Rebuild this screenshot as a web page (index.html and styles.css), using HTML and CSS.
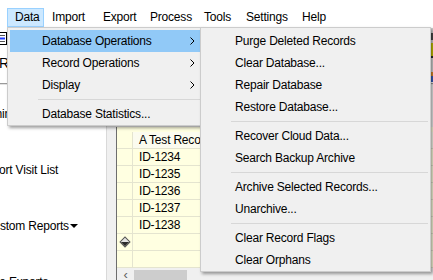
FILE: index.html
```html
<!DOCTYPE html>
<html>
<head>
<meta charset="utf-8">
<link rel="stylesheet" href="styles.css">
</head>
<body>
<div class="window">
  <div class="menubar">
    <span class="mb-item active">Data</span>
    <span class="mb-item">Import</span>
    <span class="mb-item">Export</span>
    <span class="mb-item">Process</span>
    <span class="mb-item">Tools</span>
    <span class="mb-item">Settings</span>
    <span class="mb-item">Help</span>
  </div>
  <div class="toolbar">
    <div class="tb-left">
      <svg class="tb-icon" width="10" height="14" viewBox="0 0 10 14">
        <rect x="-2.5" y="0.5" width="9" height="12" fill="#fff" stroke="#000"/>
        <line x1="0" y1="3.5" x2="5" y2="3.5" stroke="#555"/>
        <line x1="0" y1="6.5" x2="5" y2="6.5" stroke="#1e3cff" stroke-width="2"/>
        <line x1="0" y1="9.5" x2="5" y2="9.5" stroke="#555"/>
      </svg>
      <span class="tb-label">Run</span>
    </div>
    <div class="tb-right"></div>
  </div>
  <div class="workspace">
    <div class="leftpanel">
      <div class="lp-item lp-a">Admin</div>
      <div class="lp-item lp-b">Export Visit List</div>
      <div class="lp-item lp-c">Custom Reports<span class="caret"></span></div>
      <div class="lp-item lp-d">Create Exports</div>
    </div>
    <div class="gutter"></div>
    <div class="gridarea">
      <div class="grid-top"></div>
      <div class="grid">
        <div class="row head"><div class="rh"></div><div class="cell hcell">A Test Record</div></div>
        <div class="row"><div class="rh"></div><div class="cell">ID-1234</div></div>
        <div class="row"><div class="rh"></div><div class="cell">ID-1235</div></div>
        <div class="row"><div class="rh"></div><div class="cell">ID-1236</div></div>
        <div class="row"><div class="rh"></div><div class="cell">ID-1237</div></div>
        <div class="row"><div class="rh"></div><div class="cell">ID-1238</div></div>
        <div class="row"><div class="rh"><span class="diamond"></span></div><div class="cell"></div></div>
        <div class="row"><div class="rh"></div><div class="cell"></div></div>
      </div>
      <div class="hscroll">
        <span class="sb-arrow">‹</span>
        <span class="sb-thumb"></span>
      </div>
    </div>
  </div>

  <div class="menu dropdown">
    <div class="mi hot">Database Operations<span class="chev"><svg width="5" height="8" viewBox="0 0 5 8"><path d="M0.5 0.5 L4 4 L0.5 7.5" fill="none" stroke="#000" stroke-width="1"/></svg></span></div>
    <div class="mi">Record Operations<span class="chev"><svg width="5" height="8" viewBox="0 0 5 8"><path d="M0.5 0.5 L4 4 L0.5 7.5" fill="none" stroke="#000" stroke-width="1"/></svg></span></div>
    <div class="mi">Display<span class="chev"><svg width="5" height="8" viewBox="0 0 5 8"><path d="M0.5 0.5 L4 4 L0.5 7.5" fill="none" stroke="#000" stroke-width="1"/></svg></span></div>
    <div class="sep"></div>
    <div class="mi">Database Statistics...</div>
  </div>

  <div class="menu submenu">
    <div class="mi">Purge Deleted Records</div>
    <div class="mi">Clear Database...</div>
    <div class="mi">Repair Database</div>
    <div class="mi">Restore Database...</div>
    <div class="sep"></div>
    <div class="mi">Recover Cloud Data...</div>
    <div class="mi">Search Backup Archive</div>
    <div class="sep"></div>
    <div class="mi">Archive Selected Records...</div>
    <div class="mi">Unarchive...</div>
    <div class="sep"></div>
    <div class="mi">Clear Record Flags</div>
    <div class="mi">Clear Orphans</div>
  </div>
</div>
</body>
</html>
```
FILE: styles.css
```css
* { box-sizing: border-box; }
html, body {
  margin: 0;
  padding: 0;
  background: #fff;
}
body {
  font-family: "Liberation Sans", Arial, sans-serif;
  font-size: 12px;
  letter-spacing: -0.2px;
  color: #000;
}
.window {
  position: relative;
  width: 433px;
  height: 280px;
  overflow: hidden;
  background: #fff;
}

/* menu bar */
.menubar {
  height: 27px;
  padding-top: 8px;
  padding-left: 7px;
  display: grid;
  grid-template-columns: 37px 51px 47px 54px 42px 56px 36px;
}
.mb-item {
  height: 19px;
  line-height: 17px;
  padding-left: 7px;
  border: 1px solid transparent;
  white-space: nowrap;
}
.mb-item.active {
  background: #cce8ff;
  border-color: #99d1ff;
}

/* toolbar */
.toolbar {
  height: 57px;
  display: flex;
  justify-content: space-between;
  border-bottom: 1px solid #9a9a9a;
  box-shadow: 0 1px 0 #e3e3e3;
}
.tb-left {
  display: flex;
  flex-direction: column;
  padding-top: 5px;
  gap: 9px;
}
.tb-icon { display: block; }
.tb-label {
  margin-left: -1px;
  font-size: 14px;
  line-height: 16px;
}
.tb-right {
  width: 3px;
  margin-top: 1px;
  height: 54px;
  background: linear-gradient(#d4d4d4 0 5px, #4a4a4a 5px 12px, #d0d0d0 12px 15px, #c9c300 15px 28px, #2b2b2b 28px 30px, #d8d8d8 30px 44px, #e08a2a 44px 48px, #3b5fc0 48px 54px);
}

/* workspace */
.workspace {
  display: flex;
  height: 195px;
  margin-top: 1px;
}
.leftpanel {
  width: 107px;
  flex: none;
  overflow: hidden;
  border-right: 1px solid #d9d9d9;
  padding-top: 1px;
}
.lp-item {
  height: 56px;
  display: flex;
  align-items: center;
  white-space: nowrap;
}
.lp-a { margin-left: -22px; }
.lp-b { margin-left: -21px; }
.lp-c { margin-left: -15px; }
.lp-d { margin-left: -29px; }
.caret {
  display: inline-block;
  margin-left: 1px;
  border-left: 4px solid transparent;
  border-right: 4px solid transparent;
  border-top: 4px solid #000;
  vertical-align: middle;
}
.gutter {
  width: 9px;
  flex: none;
  background: #f0f0f0;
}
.gridarea {
  flex: 1;
  display: flex;
  flex-direction: column;
}
.grid-top {
  height: 44px;
  background: #f0f0f0;
}
.grid {
  border-left: 1px solid #6d6d6d;
  background: #ffffe1;
  padding-top: 5px;
}
.row {
  display: flex;
  height: 17px;
  border-bottom: 1px solid #e4e4cf;
}
.rh {
  width: 16px;
  flex: none;
  border-right: 1px solid #e4e4cf;
  position: relative;
  display: flex;
  align-items: center;
  justify-content: center;
}
.cell {
  flex: 1;
  padding-left: 6px;
  line-height: 16px;
  white-space: nowrap;
}
.hcell { background: #fbfbef; }
.diamond {
  width: 8px;
  height: 8px;
  transform: rotate(45deg);
  background: linear-gradient(135deg, #e2e2e2 0 50%, #2a2a2a 50% 100%);
  border: 1px solid #555;
}
.hscroll {
  flex: 1;
  border-left: 1px solid #6d6d6d;
  background: #f0f0f0;
  display: flex;
  align-items: flex-start;
  padding-top: 2px;
}
.sb-arrow {
  width: 17px;
  text-align: center;
  color: #606060;
  font-size: 13px;
  line-height: 10px;
}
.sb-thumb {
  width: 53px;
  height: 10px;
  background: #cdcdcd;
}

/* popup menus */
.menu {
  position: absolute;
  background: #f0f0f0;
  border: 1px solid #cccccc;
  padding: 2px 2px 0 2px;
  box-shadow: 2px 2px 3px rgba(0, 0, 0, 0.38);
}
.dropdown {
  left: 7px;
  top: 27px;
  width: 196px;
  z-index: 1;
}
.submenu {
  left: 200px;
  top: 27px;
  width: 231px;
  z-index: 2;
}
.mi {
  height: 22px;
  line-height: 22px;
  padding-left: 32px;
  padding-right: 5px;
  display: flex;
  justify-content: space-between;
  align-items: center;
  white-space: nowrap;
}
.mi.hot { background: #91c9f7; }
.chev {
  display: flex;
  margin-right: 0;
}
.chev svg { display: block; }
.sep {
  height: 1px;
  margin: 3px 0 3px 28px;
  background: #d7d7d7;
}
```
